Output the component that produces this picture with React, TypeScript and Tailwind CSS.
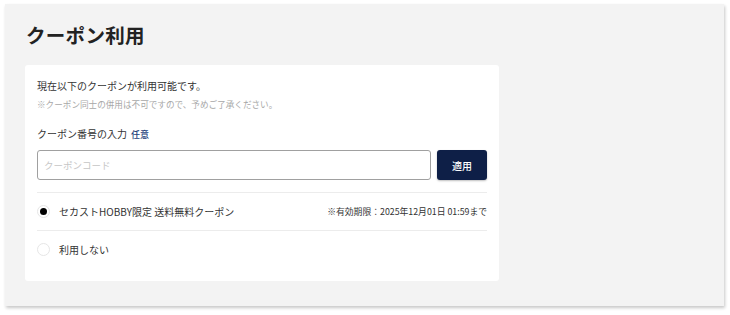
import React from "react";

export default function App() {
  return (
    <div
      className="w-[730px] h-[315px] bg-white pt-[4px] pl-[5px]"
      style={{ fontFamily: '"Noto Sans CJK JP", "Noto Sans", sans-serif' }}
    >
      <div className="w-[719px] h-[302px] bg-[#f3f3f3] shadow-[1px_2px_3px_rgba(0,0,0,0.22)] pt-[16px] pl-[20px]">
        <h1 className="text-[19.5px] leading-[30px] font-bold text-[#222] tracking-[0.3px] pl-[1px]">
          クーポン利用
        </h1>
        <div className="mt-[15px] w-[474px] h-[216px] bg-white rounded-[3px] px-[12px] pt-[13px]">
          <p className="text-[10px] leading-[16px] text-[#333]">
            現在以下のクーポンが利用可能です。
          </p>
          <p className="text-[8.6px] leading-[14px] text-[#a8a8a8] mt-[3px]">
            ※クーポン同士の併用は不可ですので、予めご了承ください。
          </p>
          <div className="mt-[15px] text-[10px] leading-[16px] text-[#333] flex items-baseline gap-[4px]">
            <span>クーポン番号の入力</span>
            <span className="text-[9px] text-[#23407a] font-medium">任意</span>
          </div>
          <div className="mt-[7px] flex gap-[6px]">
            <div className="w-[394px] h-[30px] border border-[#a0a0a0] rounded-[3px] flex items-center px-[6px]">
              <span className="text-[9.5px] text-[#c6c6c6]">クーポンコード</span>
            </div>
            <button className="w-[50px] h-[30px] bg-[#0e1f47] rounded-[3px] text-white text-[10px] font-medium shadow-[0_1px_2px_rgba(0,0,0,0.25)]">
              適用
            </button>
          </div>
          <div className="mt-[12px] border-t border-[#ececec]" />
          <div className="h-[37px] flex items-center">
            <span className="w-[13px] h-[13px] rounded-full border border-[#e6e6e6] flex items-center justify-center">
              <span className="w-[7px] h-[7px] rounded-full bg-black" />
            </span>
            <span className="ml-[9px] text-[10px] text-[#333]">
              セカストHOBBY限定 送料無料クーポン
            </span>
            <span className="ml-auto text-[8.8px] text-[#333]">
              ※有効期限：2025年12月01日 01:59まで
            </span>
          </div>
          <div className="border-t border-[#ececec]" />
          <div className="h-[37px] flex items-center">
            <span className="w-[13px] h-[13px] rounded-full border border-[#e6e6e6]" />
            <span className="ml-[9px] text-[10px] text-[#333]">利用しない</span>
          </div>
        </div>
      </div>
    </div>
  );
}
